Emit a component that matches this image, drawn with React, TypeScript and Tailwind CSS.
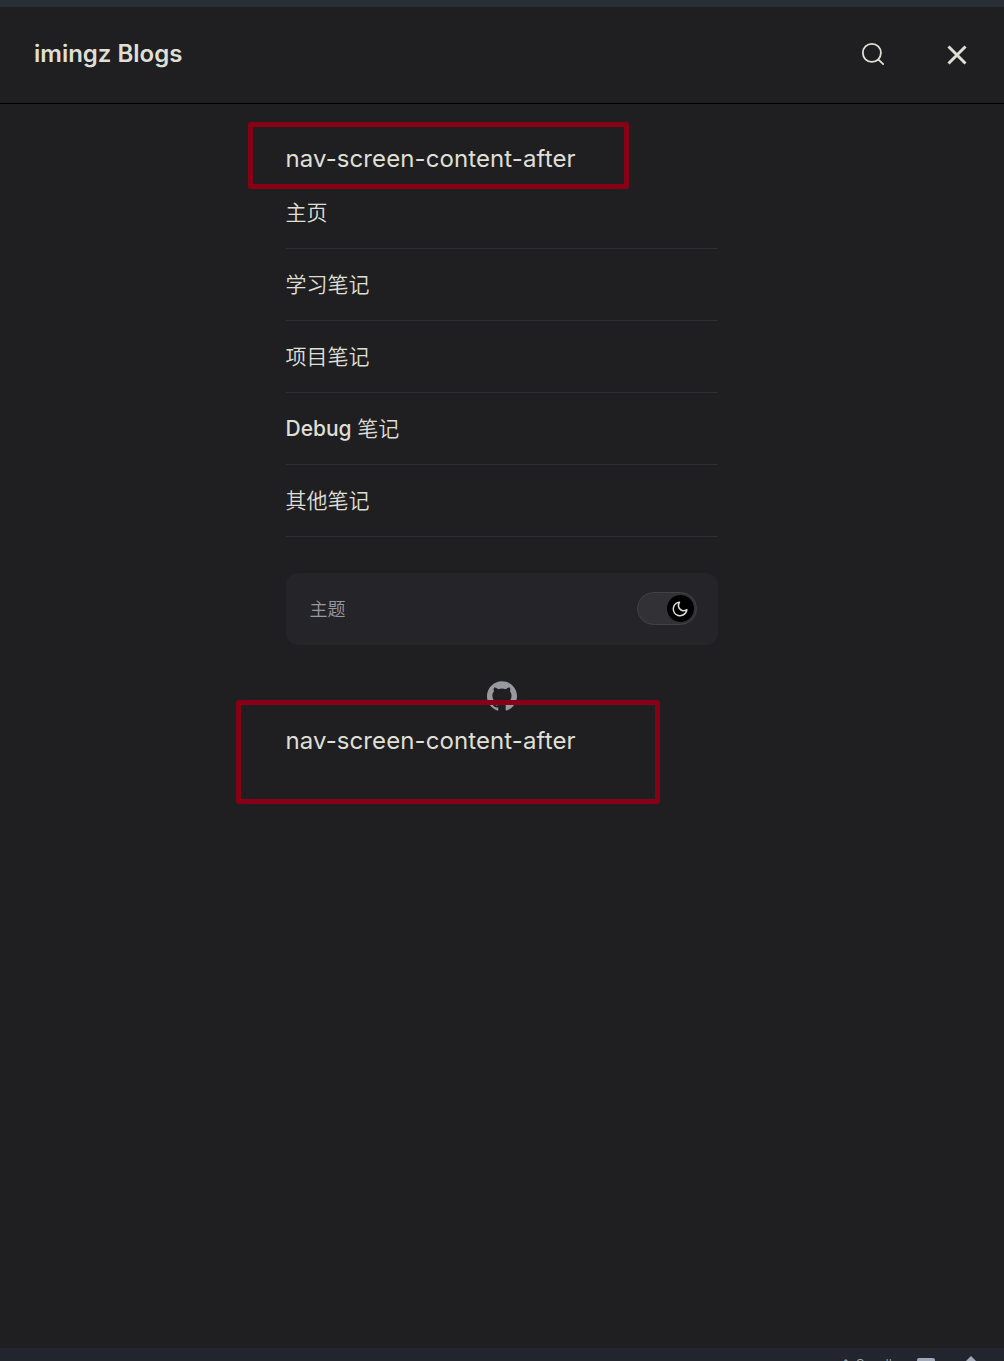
import React from "react";

const links = ["主页", "学习笔记", "项目笔记", "Debug 笔记", "其他笔记"];

function SearchIcon() {
  return (
    <svg width="24" height="24" viewBox="0 0 20 20" fill="none" stroke="currentColor" strokeWidth="1.5" strokeLinecap="round" strokeLinejoin="round">
      <path d="M14.386 14.386l4.0877 4.0877-4.0877-4.0877c-2.9418 2.9419-7.7115 2.9419-10.6533 0-2.9419-2.9418-2.9419-7.7115 0-10.6533 2.9418-2.9419 7.7115-2.9419 10.6533 0 2.9419 2.9418 2.9419 7.7115 0 10.6533z" />
    </svg>
  );
}

function CloseIcon() {
  return (
    <svg width="20" height="20" viewBox="0 0 20 20" stroke="currentColor" strokeWidth="3">
      <path d="M1.5 1.5L18.5 18.5M18.5 1.5L1.5 18.5" />
    </svg>
  );
}

function MoonIcon() {
  return (
    <svg width="18" height="18" viewBox="0 0 24 24" fill="currentColor">
      <path d="M12.1,22c-0.3,0-0.6,0-0.9,0c-5.5-0.5-9.5-5.4-9-10.9c0.4-4.8,4.2-8.6,9-9c0.4,0,0.8,0.2,1,0.5c0.2,0.3,0.2,0.8-0.1,1.1c-2,2.7-1.4,6.4,1.3,8.4c2.1,1.6,5,1.6,7.1,0c0.3-0.2,0.7-0.3,1.1-0.1c0.3,0.2,0.5,0.6,0.5,1c-0.2,2.7-1.5,5.1-3.6,6.8C16.6,21.2,14.4,22,12.1,22z M9.3,4.4c-2.9,1-5,3.6-5.2,6.8c-0.4,4.4,2.8,8.3,7.2,8.7c2.1,0.2,4.2-0.4,5.8-1.8c1.1-0.9,1.9-2.1,2.4-3.4c-2.5,0.9-5.3,0.5-7.5-1.1C9.2,11.4,8.1,7.7,9.3,4.4z" />
    </svg>
  );
}

function GithubIcon() {
  return (
    <svg width="30" height="30" viewBox="0 0 24 24" fill="currentColor">
      <path d="M12 .297c-6.63 0-12 5.373-12 12 0 5.303 3.438 9.8 8.205 11.385.6.113.82-.258.82-.577 0-.285-.01-1.04-.015-2.04-3.338.724-4.042-1.61-4.042-1.61C4.422 18.07 3.633 17.7 3.633 17.7c-1.087-.744.084-.729.084-.729 1.205.084 1.838 1.236 1.838 1.236 1.07 1.835 2.809 1.305 3.495.998.108-.776.417-1.305.76-1.605-2.665-.3-5.466-1.332-5.466-5.93 0-1.31.465-2.38 1.235-3.22-.135-.303-.54-1.523.105-3.176 0 0 1.005-.322 3.3 1.23.96-.267 1.98-.399 3-.405 1.02.006 2.04.138 3 .405 2.28-1.552 3.285-1.23 3.285-1.23.645 1.653.24 2.873.12 3.176.765.84 1.23 1.91 1.23 3.22 0 4.61-2.805 5.625-5.475 5.92.42.36.81 1.096.81 2.22 0 1.606-.015 2.896-.015 3.286 0 .315.21.69.825.57C20.565 22.092 24 17.592 24 12.297c0-6.627-5.373-12-12-12" />
    </svg>
  );
}

export default function App() {
  return (
    <div className="relative flex h-[1361px] w-[1004px] flex-col overflow-hidden bg-[#1f1f21] font-['Inter','Noto_Sans_CJK_SC',sans-serif] text-[#dfdfd6]">
      <div className="h-[7px] shrink-0 bg-[#2a2e37]" />
      <header className="flex h-[97px] shrink-0 items-center justify-between border-b border-black pr-[37px] pb-[2px] pl-[34px]">
        <h1 className="text-2xl leading-9 font-semibold">imingz Blogs</h1>
        <div className="flex items-center gap-[62px]">
          <button aria-label="Search"><SearchIcon /></button>
          <button aria-label="Close menu" className="pt-px"><CloseIcon /></button>
        </div>
      </header>

      <main className="mx-auto w-[432px] flex-1 pt-9">
        <p className="-ml-[0.5px] text-2xl leading-[37px] tracking-[0.1px]">nav-screen-content-after</p>
        <nav>
          {links.map((label) => (
            <a key={label} className="block h-[72px] border-b border-[#2e2e32] pt-[18px] text-[21px] leading-9 font-medium">
              <span className="-ml-[0.5px]">{label.startsWith("Debug") ? "Debug " : ""}</span>
              <span className="font-[350]">{label.replace("Debug ", "")}</span>
            </a>
          ))}
        </nav>
        <div className="mt-9 flex h-[72px] items-center justify-between rounded-xl bg-[#252529] pr-[21px] pl-[23.5px]">
          <span className="pt-[2px] text-lg font-[350] text-[#98989f]">主题</span>
          <button aria-label="Toggle theme" className="mb-[2px] flex h-[33px] w-[60px] items-center justify-end rounded-full border border-[#414147] bg-[#313136] pr-[2px]">
            <span className="flex size-[27px] items-center justify-center rounded-full bg-black pt-px pr-px"><MoonIcon /></span>
          </button>
        </div>
        <div className="mt-6 flex h-[54px] items-center justify-center text-[#98989f]"><GithubIcon /></div>
        <p className="-ml-[0.5px] text-2xl leading-9 tracking-[0.1px]">nav-screen-content-after</p>
      </main>

      <footer className="flex h-[13px] shrink-0 items-start justify-end overflow-hidden bg-[#22252d] pr-[26px] text-[#a0a8b7]">
        <span className="mt-[7px] mr-[25px] text-sm leading-5 font-light">↑ Scroll</span>
        <span className="mt-[10px] mr-[29px] h-3 w-[18px] rounded-xs bg-current" />
        <svg className="mt-2" width="14" height="14" viewBox="0 0 14 14" fill="currentColor"><path d="M7 0l7 7-7 7-7-7z" /></svg>
      </footer>

      <div className="pointer-events-none absolute top-[122px] left-[248px] h-[67px] w-[381px] rounded-[3px] border-5 border-[#880015]" />
      <div className="pointer-events-none absolute top-[700px] left-[236px] h-[104px] w-[424px] rounded-[3px] border-5 border-[#880015]" />
    </div>
  );
}
